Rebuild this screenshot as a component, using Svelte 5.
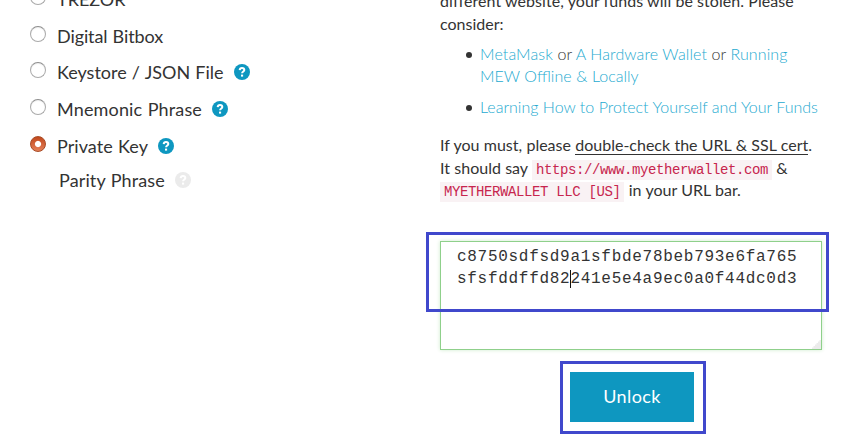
<script>
  const wallets = [
    { name: 'TREZOR', h: 37, track: 0 },
    { name: 'Digital Bitbox', h: 36, track: -0.1 },
    { name: 'Keystore / JSON File', h: 37, track: -0.01, help: true },
    { name: 'Mnemonic Phrase', h: 37, track: 0.15, help: true },
    { name: 'Private Key', h: 34, track: 0.06, help: true, checked: true },
    { name: 'Parity Phrase', h: 34, track: 0.12, help: true, plain: true }
  ];
</script>

{#snippet help(muted)}
  <svg class="help" class:muted viewBox="0 0 16 16" width="16" height="16">
    <circle cx="8" cy="8" r="8" />
    <path d="M5.7 6.1C5.8 4.6 6.8 4 8 4C9.4 4 10.3 4.8 10.3 5.9C10.3 7.5 8.1 7.4 8.1 9.3" />
    <rect x="7" y="10.6" width="2.1" height="2" />
  </svg>
{/snippet}

<main>
  <section class="wallets">
    {#each wallets as w}
      <label class:plain={w.plain} style="height:{w.h}px">
        {#if !w.plain}<span class="radio" class:checked={w.checked}></span>{/if}
        <span class="name" style="letter-spacing:{w.track}px">{w.name}</span>
        {#if w.help}{@render help(w.plain)}{/if}
      </label>
    {/each}
  </section>

  <section class="details">
    <p class="intro"><span class="l1">different website, your funds will be stolen. Please</span><br /><span>consider:</span></p>
    <ul>
      <li><span class="k1"><a>MetaMask</a> or <a>A Hardware Wallet</a> or <a>Running</a></span><br /><a class="k2">MEW Offline &amp; Locally</a></li>
      <li><a class="k3">Learning How to Protect Yourself and Your Funds</a></li>
    </ul>
    <p class="check">If you must, please <u>double-check the URL &amp; SSL cert</u>.<br />It should say <code>https://www.myetherwallet.com</code> &amp;<br /><code>MYETHERWALLET LLC [US]</code> in your URL bar.</p>
    <div class="field">
      <div class="key">c8750sdfsd9a1sfbde78beb793e6fa765<br />sfsfddffd82<i class="caret"></i>241e5e4a9ec0a0f44dc0d3</div>
      <svg class="grip" width="9" height="9" viewBox="0 0 9 9"><path d="M9 0V9H0V7.5H1.5V6H3V4.5H4.5V3H6V1.5H7.5V0Z" /></svg>
      <div class="mark"></div>
    </div>
    <div class="action"><button>Unlock</button></div>
  </section>
</main>

<style>
  :global(body) { background: #fff; }
  main {
    width: 867px; height: 447px; overflow: hidden;
    display: grid; grid-template-columns: 440px 382px;
    font: 400 16px/22px Lato, sans-serif; color: #333; background: #fff;
  }
  .wallets { padding-left: 30px; margin-top: -14px; font-size: 18px; line-height: 26px; word-spacing: .6px; }
  label { display: flex; align-items: flex-start; white-space: nowrap; }
  .radio {
    box-sizing: border-box; width: 16px; height: 16px; margin: 3px 11px 0 0;
    border: 1px solid #aaa; border-top-color: #8d8d8d; border-radius: 50%;
    background: #fff; box-shadow: inset 0 1px 1px #eee;
  }
  .radio.checked {
    border-color: #a84b25;
    background: radial-gradient(circle, #fff 2.6px, transparent 3.6px), linear-gradient(#c2481c, #e58059);
    box-shadow: none;
  }
  .plain { padding-left: 29px; }
  .help { margin: 5px 0 0 10px; fill: #0e97c0; }
  .help path { fill: none; stroke: #fff; stroke-width: 2; }
  .help rect { fill: #fff; }
  .help.muted { fill: #ebebeb; }
  .details { white-space: nowrap; min-width: 0; }
  p { margin: 0; }
  .intro { margin-top: -11px; line-height: 23px; }
  .l1 { letter-spacing: .06px; }
  ul { margin: 8px 0 0; padding: 0 0 0 40px; list-style: none; }
  li { position: relative; margin-bottom: 9px; font-weight: 300; }
  li::before {
    content: ""; position: absolute; left: -14px; top: 9px;
    width: 6px; height: 6px; border-radius: 50%; background: #333;
  }
  .k1 { letter-spacing: .11px; }
  .k2 { word-spacing: .3px; }
  .k3 { word-spacing: .1px; }
  a { color: #25aad0; font-weight: 300; }
  .check { margin-top: 16px; height: 69px; line-height: 22.6px; word-spacing: .2px; }
  u { text-decoration: none; border-bottom: 1px solid #333; }
  code {
    font: 14px/18px "Liberation Mono", monospace; letter-spacing: -.4px; color: #c7254e;
    background: #f9f2f4; padding: 2px 4px;
  }
  .field {
    position: relative; box-sizing: border-box; width: 382px; height: 109px; margin-top: 38px;
    border: 1px solid #8fd08b; box-shadow: 0 0 4px #cfeccd; padding: 4px 16px;
  }
  .key { font: 16px/22px "Liberation Mono", monospace; letter-spacing: .71px; }
  .caret { position: absolute; width: 1px; height: 18px; margin-top: 2px; background: #111; }
  .grip { position: absolute; right: 0; bottom: 0; fill: #ebebeb; }
  .mark {
    position: absolute; left: -15px; top: -10px; box-sizing: border-box;
    width: 403px; height: 80px; border: 3px solid #4048cc;
  }
  .action {
    box-sizing: border-box; width: 146px; height: 73px; margin: 11px 0 0 120px;
    border: 3px solid #4048cc; padding: 8px 7px;
  }
  button {
    display: block; width: 124px; height: 50px; padding: 0 0 2px; border: 0; border-radius: 0;
    background: #0e97c0; color: #fff; font: 400 18px/48px Lato, sans-serif; letter-spacing: .4px;
  }
</style>
